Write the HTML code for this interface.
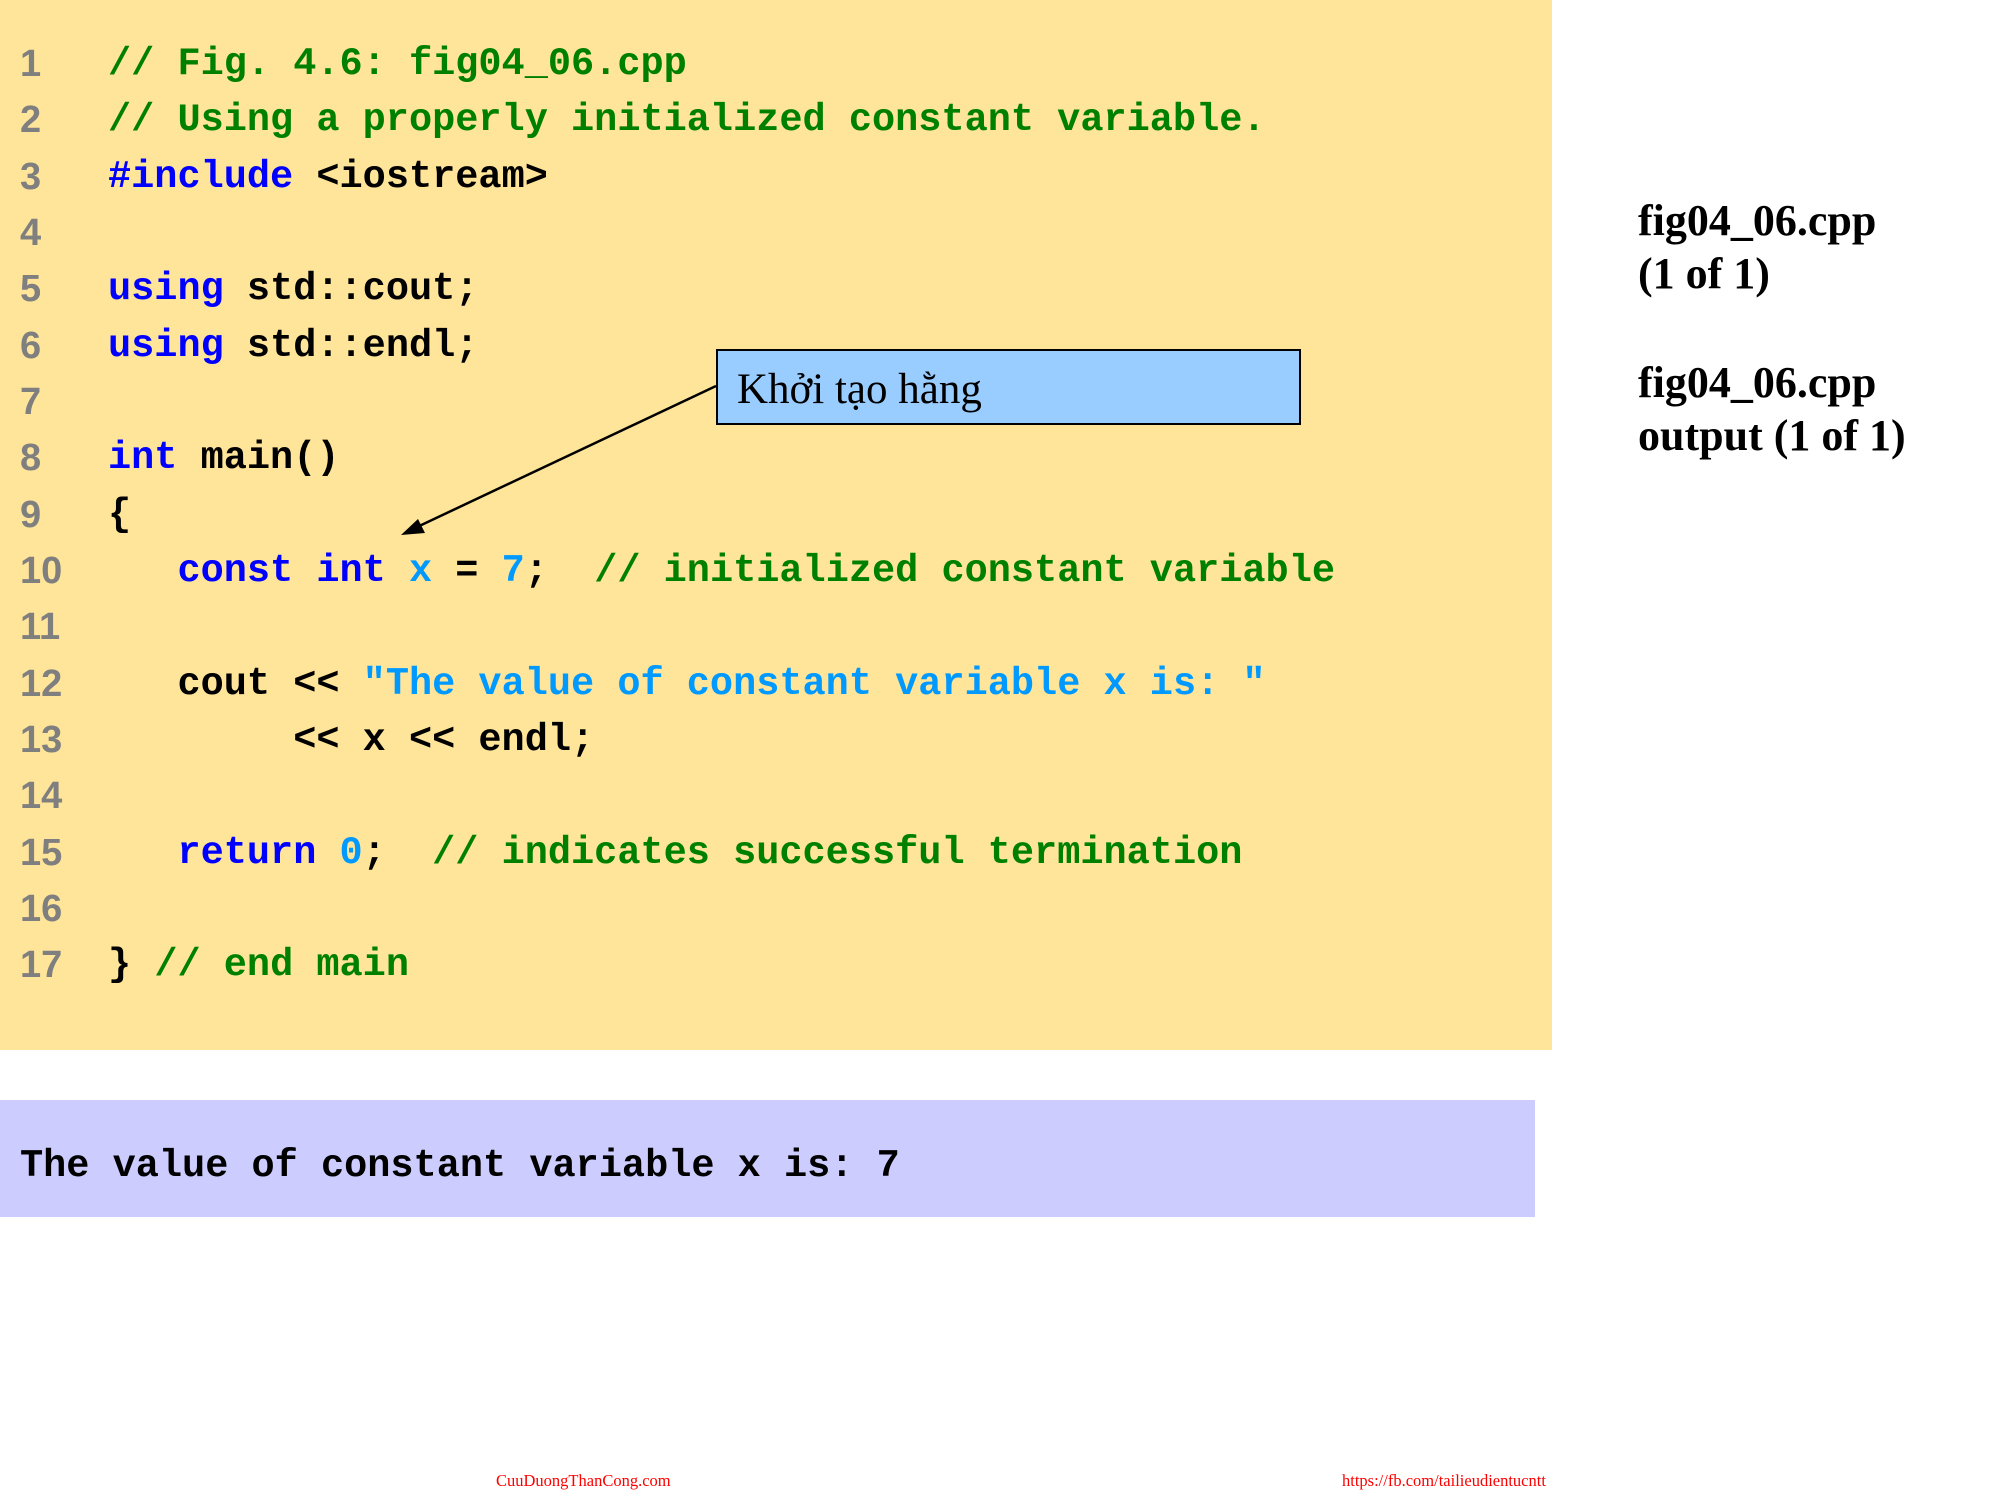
<!DOCTYPE html>
<html><head><meta charset="utf-8"><style>
body{margin:0;width:2000px;height:1500px;position:relative;background:#fff;overflow:hidden}
#code{position:absolute;left:0;top:0;width:1552px;height:1050px;background:#FFE599}
.ln{position:absolute;left:20px;font:bold 38px "Liberation Sans",sans-serif;color:#7f7f7f;line-height:40px}
.c{position:absolute;left:108px;font:bold 38.6px "Liberation Mono",monospace;white-space:pre;color:#000;line-height:40px}
.g{color:#008000}.b{color:#0000ff}.l{color:#0099ff}
#out{position:absolute;left:0;top:1100px;width:1535px;height:117px;background:#CCCCFF}
.r{position:absolute;left:1638px;font:bold 44px "Liberation Serif",serif;line-height:44px}
.f{position:absolute;top:1471px;font:16.5px "Liberation Serif",serif;color:#f00}
</style></head><body>
<div id="code"></div>
<div class="ln" style="top:44px">1</div><div class="c g" style="top:44px">// Fig. 4.6: fig04_06.cpp</div>
<div class="ln" style="top:100px">2</div><div class="c g" style="top:100px">// Using a properly initialized constant variable.</div>
<div class="ln" style="top:157px">3</div><div class="c" style="top:157px"><span class="b">#include</span> &lt;iostream&gt;</div>
<div class="ln" style="top:213px">4</div>
<div class="ln" style="top:269px">5</div><div class="c" style="top:269px"><span class="b">using</span> std::cout;</div>
<div class="ln" style="top:326px">6</div><div class="c" style="top:326px"><span class="b">using</span> std::endl;</div>
<div class="ln" style="top:382px">7</div>
<div class="ln" style="top:438px">8</div><div class="c" style="top:438px"><span class="b">int</span> main()</div>
<div class="ln" style="top:495px">9</div><div class="c" style="top:495px">{</div>
<div class="ln" style="top:551px">10</div><div class="c" style="top:551px">   <span class="b">const int</span> <span class="l">x</span> = <span class="l">7</span>;  <span class="g">// initialized constant variable</span></div>
<div class="ln" style="top:607px">11</div>
<div class="ln" style="top:664px">12</div><div class="c" style="top:664px">   cout &lt;&lt; <span class="l">"The value of constant variable x is: "</span></div>
<div class="ln" style="top:720px">13</div><div class="c" style="top:720px">        &lt;&lt; x &lt;&lt; endl;</div>
<div class="ln" style="top:776px">14</div>
<div class="ln" style="top:833px">15</div><div class="c" style="top:833px">   <span class="b">return</span> <span class="l">0</span>;  <span class="g">// indicates successful termination</span></div>
<div class="ln" style="top:889px">16</div>
<div class="ln" style="top:945px">17</div><div class="c" style="top:945px">} <span class="g">// end main</span></div>
<div style="position:absolute;left:716px;top:349px;width:581px;height:72px;background:#99CCFF;border:2px solid #000"></div>
<div style="position:absolute;left:737px;top:365px;font:43px 'Liberation Serif',serif;line-height:50px">Khởi tạo hằng</div>
<svg style="position:absolute;left:0;top:0" width="2000" height="1500"><line x1="716" y1="386" x2="415" y2="528" stroke="#000" stroke-width="2.5"/><polygon points="401,535 418,519 425,533" fill="#000"/></svg>
<div class="r" style="top:199px">fig04_06.cpp</div>
<div class="r" style="top:252px">(1 of 1)</div>
<div class="r" style="top:361px">fig04_06.cpp</div>
<div class="r" style="top:414px">output (1 of 1)</div>
<div id="out"></div>
<div class="c" style="left:20px;top:1146px">The value of constant variable x is: 7</div>
<div class="f" style="left:496px">CuuDuongThanCong.com</div>
<div class="f" style="left:1342px">https://fb.com/tailieudientucntt</div>
</body></html>
